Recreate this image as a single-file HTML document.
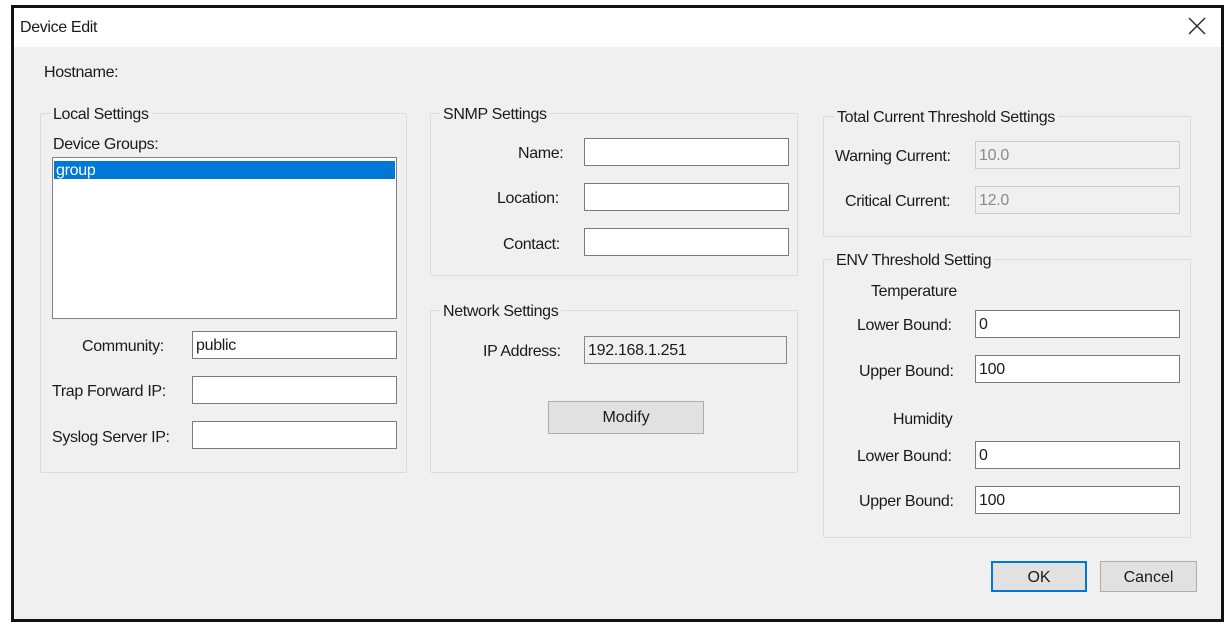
<!DOCTYPE html>
<html><head><meta charset="utf-8"><style>
*{box-sizing:border-box;margin:0;padding:0}
body{width:1231px;height:629px;background:#fff;position:relative;overflow:hidden;font-family:"Liberation Sans",sans-serif;font-size:16px;color:#1a1a1a}
.win{position:absolute;left:11px;top:5px;width:1213px;height:617px;border:3px solid #111;background:#f0f0f0}
.title{position:absolute;left:0;top:0;width:100%;height:39px;background:#fff}
.t{position:absolute;white-space:nowrap;line-height:18px;letter-spacing:-0.35px;margin-top:2px}
.g{position:absolute;border:1px solid #dcdcdc;border-radius:2px}
.in{position:absolute;height:28px;background:#fff;border:1px solid #7a7a7a;padding:5px 3px;line-height:18px;font-size:16px;letter-spacing:-0.3px}
.dis{background:#f0f0f0;border-color:#ccc;color:#8a8a8a}
.btn{position:absolute;background:#e1e1e1;border:1px solid #adadad;text-align:center;line-height:28px}
.lbl{background:#f0f0f0;padding:0 3px}
</style></head><body>
<div class="win">
<div class="title"></div>
</div>
<div class="t" style="left:20px;top:17px;font-size:16px">Device Edit</div>
<svg style="position:absolute;left:1188px;top:17px" width="18" height="18"><path d="M1 1L17 17M17 1L1 17" stroke="#222" stroke-width="1.3"/></svg>

<div class="t" style="left:44px;top:62px">Hostname:</div>

<div class="g" style="left:40px;top:113px;width:367px;height:360px"></div>
<div class="t lbl" style="left:50px;top:104px">Local Settings</div>
<div class="t" style="left:53px;top:134px">Device Groups:</div>
<div style="position:absolute;left:52px;top:157px;width:345px;height:162px;background:#fff;border:1px solid #828282"></div>
<div style="position:absolute;left:54px;top:161px;width:341px;height:18px;background:#0078d7;color:#fff;line-height:20px;padding-left:2px;letter-spacing:-0.3px">group</div>
<div class="t" style="left:82px;top:336px">Community:</div>
<div class="in" style="left:192px;top:331px;width:205px">public</div>
<div class="t" style="left:52px;top:381px">Trap Forward IP:</div>
<div class="in" style="left:192px;top:376px;width:205px"></div>
<div class="t" style="left:52px;top:427px">Syslog Server IP:</div>
<div class="in" style="left:192px;top:421px;width:205px"></div>

<div class="g" style="left:430px;top:113px;width:368px;height:163px"></div>
<div class="t lbl" style="left:440px;top:104px">SNMP Settings</div>
<div class="t" style="left:518px;top:143px">Name:</div>
<div class="in" style="left:584px;top:138px;width:205px"></div>
<div class="t" style="left:497px;top:188px">Location:</div>
<div class="in" style="left:584px;top:183px;width:205px"></div>
<div class="t" style="left:503px;top:234px">Contact:</div>
<div class="in" style="left:584px;top:228px;width:205px"></div>

<div class="g" style="left:430px;top:310px;width:368px;height:163px"></div>
<div class="t lbl" style="left:440px;top:301px">Network Settings</div>
<div class="t" style="left:483px;top:341px">IP Address:</div>
<div class="in" style="left:584px;top:336px;width:203px;background:#f0f0f0;border-color:#888">192.168.1.251</div>
<div class="btn" style="left:548px;top:401px;width:156px;height:33px;line-height:31px">Modify</div>

<div class="g" style="left:823px;top:116px;width:368px;height:121px"></div>
<div class="t lbl" style="left:834px;top:107px">Total Current Threshold Settings</div>
<div class="t" style="left:835px;top:146px">Warning Current:</div>
<div class="in dis" style="left:975px;top:141px;width:205px">10.0</div>
<div class="t" style="left:845px;top:191px">Critical Current:</div>
<div class="in dis" style="left:975px;top:186px;width:205px">12.0</div>

<div class="g" style="left:823px;top:259px;width:368px;height:279px"></div>
<div class="t lbl" style="left:833px;top:250px">ENV Threshold Setting</div>
<div class="t" style="left:871px;top:281px">Temperature</div>
<div class="t" style="left:857px;top:315px">Lower Bound:</div>
<div class="in" style="left:975px;top:310px;width:205px">0</div>
<div class="t" style="left:859px;top:361px">Upper Bound:</div>
<div class="in" style="left:975px;top:355px;width:205px">100</div>
<div class="t" style="left:893px;top:409px">Humidity</div>
<div class="t" style="left:857px;top:446px">Lower Bound:</div>
<div class="in" style="left:975px;top:441px;width:205px">0</div>
<div class="t" style="left:859px;top:491px">Upper Bound:</div>
<div class="in" style="left:975px;top:486px;width:205px">100</div>

<div class="btn" style="left:991px;top:561px;width:96px;height:31px;border:2px solid #0078d7;line-height:29px">OK</div>
<div class="btn" style="left:1100px;top:561px;width:97px;height:31px;line-height:31px">Cancel</div>
</body></html>
